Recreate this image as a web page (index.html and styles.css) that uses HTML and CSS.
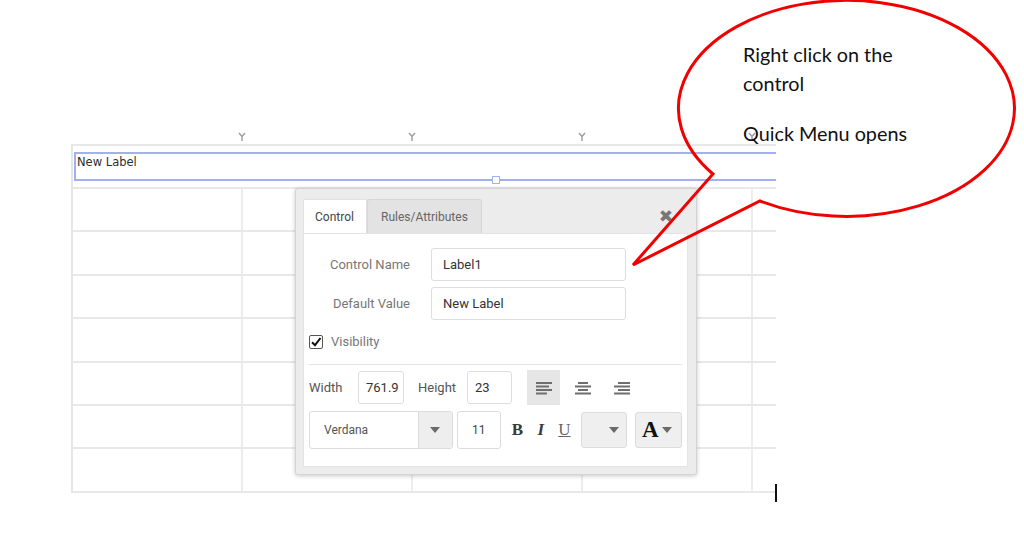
FILE: index.html
```html
<!DOCTYPE html>
<html>
<head>
<meta charset="utf-8">
<title>Quick Menu</title>
<link rel="stylesheet" href="styles.css">
</head>
<body>
<div class="stage">
  <div class="designer">
    <div class="markers">
      <div class="mcell"><svg class="mk" viewBox="0 0 8 9"><path d="M1 1 L4 4.5 L7 1 M4 4.5 L4 9"/></svg></div>
      <div class="mcell"><svg class="mk" viewBox="0 0 8 9"><path d="M1 1 L4 4.5 L7 1 M4 4.5 L4 9"/></svg></div>
      <div class="mcell"><svg class="mk" viewBox="0 0 8 9"><path d="M1 1 L4 4.5 L7 1 M4 4.5 L4 9"/></svg></div>
      <div class="mcell"><svg class="mk" viewBox="0 0 8 9"><path d="M1 1 L4 4.5 L7 1 M4 4.5 L4 9"/></svg></div>
    </div>
    <div class="grid">
      <div class="label-row">
        <div class="label-box">New Label<span class="handle"></span></div>
      </div>
      <div class="row"><div class="cell"></div><div class="cell"></div><div class="cell"></div><div class="cell"></div><div class="cell last"></div></div>
      <div class="row"><div class="cell"></div><div class="cell"></div><div class="cell"></div><div class="cell"></div><div class="cell last"></div></div>
      <div class="row"><div class="cell"></div><div class="cell"></div><div class="cell"></div><div class="cell"></div><div class="cell last"></div></div>
      <div class="row"><div class="cell"></div><div class="cell"></div><div class="cell"></div><div class="cell"></div><div class="cell last"></div></div>
      <div class="row"><div class="cell"></div><div class="cell"></div><div class="cell"></div><div class="cell"></div><div class="cell last"></div></div>
      <div class="row"><div class="cell"></div><div class="cell"></div><div class="cell"></div><div class="cell"></div><div class="cell last"></div></div>
      <div class="row"><div class="cell"></div><div class="cell"></div><div class="cell"></div><div class="cell"></div><div class="cell last"></div></div>
    </div>
  </div>

  <div class="quick-menu">
    <div class="tabs">
      <div class="tab active">Control</div>
      <div class="tab inactive">Rules/Attributes</div>
      <div class="close">&#10006;</div>
    </div>
    <div class="panel">
      <div class="field">
        <span class="flabel">Control Name</span>
        <span class="finput">Label1</span>
      </div>
      <div class="field">
        <span class="flabel">Default Value</span>
        <span class="finput">New Label</span>
      </div>
      <div class="check-row">
        <span class="checkbox"><svg viewBox="0 0 12 12"><path d="M2 6.2 L5 9.2 L10.5 2"/></svg></span>
        <span class="check-text">Visibility</span>
      </div>
      <div class="sep"></div>
      <div class="size-row">
        <span class="slabel">Width</span>
        <span class="num w">761.9</span>
        <span class="slabel h">Height</span>
        <span class="num hh">23</span>
        <div class="aligns">
          <span class="abtn on"><svg viewBox="0 0 16 14"><rect x="0" y="1" width="16" height="2"/><rect x="0" y="4.5" width="13" height="2"/><rect x="0" y="8" width="16" height="2"/><rect x="0" y="11.5" width="11" height="2"/></svg></span>
          <span class="abtn"><svg viewBox="0 0 16 14"><rect x="3" y="1" width="10" height="2"/><rect x="0" y="4.5" width="16" height="2"/><rect x="3" y="8" width="10" height="2"/><rect x="0" y="11.5" width="16" height="2"/></svg></span>
          <span class="abtn"><svg viewBox="0 0 16 14"><rect x="4" y="1" width="12" height="2"/><rect x="0" y="4.5" width="16" height="2"/><rect x="4" y="8" width="12" height="2"/><rect x="0" y="11.5" width="16" height="2"/></svg></span>
        </div>
      </div>
      <div class="font-row">
        <div class="font-sel"><span class="font-name">Verdana</span><span class="arrow-box"><span class="tri"></span></span></div>
        <span class="fsize">11</span>
        <div class="fmt">
          <span class="b">B</span>
          <span class="i">I</span>
          <span class="u">U</span>
        </div>
        <div class="color-sel"><span class="tri"></span></div>
        <div class="a-sel"><span class="bigA">A</span><span class="tri"></span></div>
      </div>
    </div>
  </div>

  <svg class="callout" viewBox="0 0 1024 555"><path d="M713 174 A168 108 0 1 1 760 201 L633 265 Z"/></svg>
  <div class="callout-text">
    <p>Right click on the<br>control</p>
    <p>Quick Menu opens</p>
  </div>
  <div class="cursor"></div>
</div>
</body>
</html>
```
FILE: styles.css
```css
html, body {
  margin: 0;
  padding: 0;
  background: #ffffff;
}
body {
  font-family: Roboto, "Liberation Sans", sans-serif;
}
.stage {
  position: relative;
  width: 1024px;
  height: 555px;
  overflow: hidden;
}

/* designer grid */
.designer {
  padding-top: 132px;
  padding-left: 71px;
}
.markers {
  display: flex;
  height: 12px;
  padding-left: 2px;
}
.mcell {
  width: 170px;
  flex: none;
  display: flex;
  justify-content: flex-end;
  align-items: flex-start;
}
.mk {
  width: 8px;
  height: 9px;
  margin-right: -3px;
  fill: none;
  stroke: #9a9a9a;
  stroke-width: 1.4;
}
.grid {
  width: 705px;
  box-sizing: border-box;
  border-top: 2px solid #e8e8e8;
  border-left: 2px solid #e6e6e6;
  overflow: hidden;
}
.label-row {
  padding-top: 6px;
  height: 35px;
  border-bottom: 2px solid #e8e8e8;
}
.label-box {
  position: relative;
  margin-left: 1px;
  width: 760px;
  height: 29px;
  box-sizing: border-box;
  border: 2px solid #a2b0f0;
  border-right: none;
  padding: 1px 0 0 1px;
  font-family: "DejaVu Sans", Verdana, sans-serif;
  font-size: 11.5px;
  color: #2e2e2e;
}
.handle {
  position: absolute;
  left: 416px;
  bottom: -5px;
  width: 6px;
  height: 6px;
  border: 1.5px solid #a2b0f0;
  background: #fff;
}
.row {
  display: flex;
  height: 41.4px;
  border-bottom: 2px solid #e8e8e8;
}
.cell {
  width: 170px;
  flex: none;
  box-sizing: border-box;
  border-right: 2px solid #ededed;
}
.cell.last {
  border-right: none;
}

/* quick menu */
.quick-menu {
  position: absolute;
  left: 295px;
  top: 188px;
  width: 402px;
  height: 287px;
  box-sizing: border-box;
  background: #ececec;
  border: 1px solid #d4d4d4;
  border-radius: 3px;
  box-shadow: 0 1px 4px rgba(0, 0, 0, 0.22);
  padding: 10px 8px 7px 7px;
  display: flex;
  flex-direction: column;
}
.tabs {
  display: flex;
  height: 34px;
  flex: none;
}
.tab {
  display: flex;
  align-items: center;
  box-sizing: border-box;
  font-size: 12px;
}
.tab.active {
  width: 64px;
  padding-left: 11px;
  background: #fff;
  border: 1px solid #e2e2e2;
  border-bottom: none;
  color: #444;
}
.tab.inactive {
  width: 115px;
  padding-left: 13px;
  background: #e3e3e3;
  border: 1px solid #d6d6d6;
  border-bottom: none;
  border-radius: 3px 3px 0 0;
  color: #666;
}
.close {
  margin-left: auto;
  margin-right: 15px;
  align-self: center;
  font-family: "DejaVu Sans", sans-serif;
  font-size: 17px;
  color: #777;
}
.panel {
  flex: 1;
  background: #fff;
  border: 1px solid #e4e4e4;
  padding: 14px 5px 0 5px;
}
.field {
  display: flex;
  align-items: center;
  height: 33px;
  margin-bottom: 6px;
}
.flabel {
  width: 101px;
  text-align: right;
  font-size: 13px;
  color: #777;
}
.finput {
  margin-left: 21px;
  width: 195px;
  height: 33px;
  box-sizing: border-box;
  border: 1px solid #dedede;
  border-radius: 3px;
  padding-left: 11px;
  display: flex;
  align-items: center;
  font-size: 13px;
  color: #333;
}
.check-row {
  display: flex;
  align-items: center;
  height: 15px;
  margin-top: 14px;
}
.checkbox {
  width: 14px;
  height: 14px;
  box-sizing: border-box;
  border: 1px solid #555;
  border-radius: 2px;
  display: flex;
}
.checkbox svg {
  width: 12px;
  height: 12px;
  fill: none;
  stroke: #111;
  stroke-width: 2;
}
.check-text {
  margin-left: 8px;
  font-size: 13px;
  color: #777;
}
.sep {
  height: 1px;
  background: #e3e3e3;
  margin: 15px 0 5px;
}
.size-row {
  display: flex;
  align-items: center;
  height: 35px;
}
.slabel {
  width: 49px;
  font-size: 13px;
  color: #555;
}
.slabel.h {
  margin-left: 14px;
}
.num {
  height: 33px;
  box-sizing: border-box;
  border: 1px solid #dedede;
  border-radius: 3px;
  display: flex;
  align-items: center;
  padding-left: 7px;
  overflow: hidden;
  white-space: nowrap;
  font-size: 13px;
  color: #333;
}
.num.w { width: 46px; }
.num.hh { width: 45px; }
.aligns {
  display: flex;
  gap: 6px;
  margin-left: 15px;
}
.abtn {
  width: 33px;
  height: 35px;
  display: flex;
  align-items: center;
  justify-content: center;
}
.abtn.on {
  background: #e6e6e6;
}
.abtn svg {
  width: 16px;
  height: 14px;
  fill: #6e6e6e;
}
.font-row {
  display: flex;
  align-items: center;
  margin-top: 6px;
  height: 38px;
}
.font-sel {
  width: 144px;
  height: 38px;
  box-sizing: border-box;
  border: 1px solid #dcdcdc;
  border-radius: 3px;
  display: flex;
  overflow: hidden;
}
.font-name {
  flex: 1;
  padding-left: 14px;
  display: flex;
  align-items: center;
  font-size: 12px;
  color: #555;
}
.arrow-box {
  width: 33px;
  background: #eeeeee;
  border-left: 1px solid #dcdcdc;
  display: flex;
  align-items: center;
  justify-content: center;
}
.tri {
  width: 0;
  height: 0;
  border-left: 5px solid transparent;
  border-right: 5px solid transparent;
  border-top: 6px solid #6a6a6a;
}
.fsize {
  margin-left: 4px;
  width: 44px;
  height: 38px;
  box-sizing: border-box;
  border: 1px solid #dcdcdc;
  border-radius: 3px;
  display: flex;
  align-items: center;
  justify-content: center;
  font-size: 12px;
  color: #444;
}
.fmt {
  display: flex;
  margin-left: 5px;
  font-family: "Liberation Serif", "DejaVu Serif", serif;
  font-size: 17px;
  color: #3a3a3a;
}
.fmt span {
  width: 23.5px;
  text-align: center;
}
.fmt .b { font-weight: bold; }
.fmt .i { font-style: italic; font-weight: bold; }
.fmt .u { text-decoration: underline; color: #666; }
.color-sel {
  margin-left: 5px;
  width: 46px;
  height: 36px;
  box-sizing: border-box;
  background: #efefef;
  border: 1px solid #dcdcdc;
  border-radius: 3px;
  display: flex;
  align-items: center;
  justify-content: flex-end;
  padding-right: 7px;
}
.a-sel {
  margin-left: 8px;
  width: 47px;
  height: 36px;
  box-sizing: border-box;
  background: #efefef;
  border: 1px solid #dcdcdc;
  border-radius: 3px;
  display: flex;
  align-items: center;
  padding-left: 6px;
  gap: 3px;
}
.bigA {
  font-family: "Liberation Serif", "DejaVu Serif", serif;
  font-weight: bold;
  font-size: 23px;
  color: #111;
}

/* callout */
.callout {
  position: absolute;
  left: 0;
  top: 0;
  width: 1024px;
  height: 555px;
  fill: none;
  stroke: #f00000;
  stroke-width: 3;
  stroke-linejoin: miter;
}
.callout-text {
  position: absolute;
  left: 743px;
  top: 40px;
  font-family: Lato, "Open Sans", sans-serif;
  font-size: 19.8px;
  line-height: 29px;
  color: #111;
}
.callout-text p {
  margin: 0 0 21px;
}
.cursor {
  position: absolute;
  left: 775px;
  top: 484px;
  width: 2px;
  height: 18px;
  background: #111;
}
```
